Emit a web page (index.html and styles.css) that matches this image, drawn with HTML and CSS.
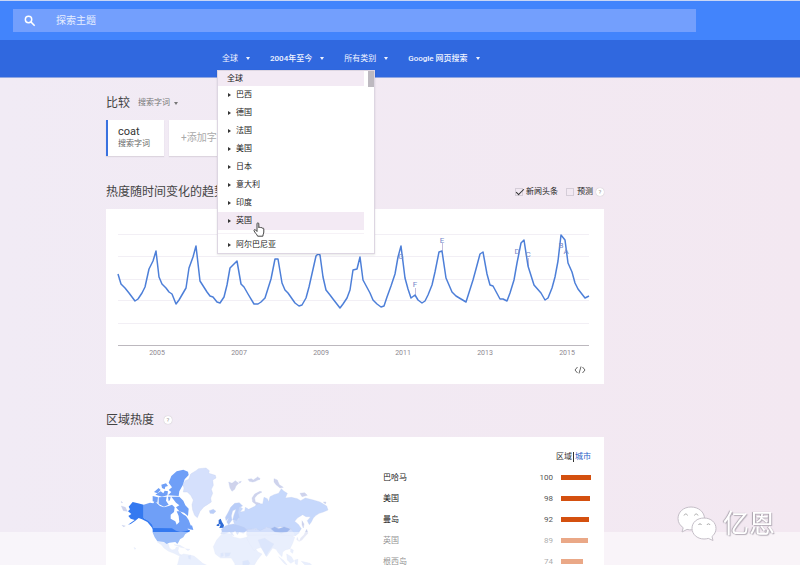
FILE: index.html
```html
<!DOCTYPE html>
<html lang="zh-CN">
<head>
  <meta charset="UTF-8">
  <meta name="viewport" content="width=device-width, initial-scale=1">
  <title>coat - 探索主题</title>
  <link rel="stylesheet" href="styles.css">
</head>
<body>
  <header>
    <div class="topbar">
      <form class="search">
        <svg class="search-icon" viewBox="0 0 24 24" aria-hidden="true"><circle cx="9.500" cy="9.500" r="5.500"/><path d="M13.500 13.500L20 20"/></svg>
        <input type="text" class="search-input" aria-label="探索主题" placeholder="探索主题">
      </form>
    </div>
    <nav class="filters">
      <div class="filter">
        <button class="filter-btn">全球<span class="caret"></span></button>
        <div class="menu">
          <div class="menu-list">
            <button class="menu-item first">全球</button>
            <button class="menu-item"><span class="arrow"></span>巴西</button>
            <button class="menu-item"><span class="arrow"></span>德国</button>
            <button class="menu-item"><span class="arrow"></span>法国</button>
            <button class="menu-item"><span class="arrow"></span>美国</button>
            <button class="menu-item"><span class="arrow"></span>日本</button>
            <button class="menu-item"><span class="arrow"></span>意大利</button>
            <button class="menu-item"><span class="arrow"></span>印度</button>
            <button class="menu-item active"><span class="arrow"></span>英国</button>
            <hr class="menu-line">
            <button class="menu-item last"><span class="arrow"></span>阿尔巴尼亚</button>
          </div>
          <div class="menu-thumb"></div>
          <svg class="cursor" viewBox="0 0 12 15" aria-hidden="true"><path d="M4 9.500V1.800c0-1.300 1.800-1.300 1.800 0v4c.2-.9 1.700-.8 1.700.2.300-.8 1.700-.6 1.700.4.400-.6 1.600-.4 1.600.6v3c0 1.500-.9 2.200-.9 4.200H4.600C4.200 12.500 1.500 10.500 1 8.600.8 7.600 2 7.200 2.700 8z"/></svg>
        </div>
      </div>
      <button class="filter-btn bold">2004年至今<span class="caret"></span></button>
      <button class="filter-btn">所有类别<span class="caret"></span></button>
      <button class="filter-btn bold">Google 网页搜索<span class="caret"></span></button>
    </nav>
  </header>

  <main>
    <div class="compare">
      <h2>比较</h2>
      <button class="type-btn">搜索字词<span class="caret"></span></button>
    </div>
    <div class="terms">
      <div class="term">
        <span class="term-name">coat</span>
        <span class="term-type">搜索字词</span>
      </div>
      <button class="add-term">+添加字词</button>
    </div>

    <div class="section-head">
      <h2>热度随时间变化的趋势</h2>
      <div class="options">
        <label><input type="checkbox" checked>新闻头条</label>
        <label><input type="checkbox">预测</label>
        <button class="help">?</button>
      </div>
    </div>
    <section class="card">
      <svg class="chart" viewBox="106 209 498 150" role="img" aria-label="热度随时间变化的趋势">
        <path class="grid" d="M118 234.500H589M118 256.500H589M118 279.500H589M118 300.500H589M118 323.500H589"/>
        <path class="axis" d="M118 345.500H589"/>
        <path class="flag" d="M442.500 243V251M415.500 288V296M401.500 251V253M528.500 258V266"/>
        <polyline class="line" points="118,274 121,284 125,288 129,293 135,301 138,299 142,293 145,287 149,269 153,261 156,251 159,277 162,284 166,288 169,292 172,294 176,304 179,300 186,288 189,268 193,257 196,246 200,281 207,292 210,296 213,297 217,302 220,303 224,297 227,285 230,268 237,261 241,284 244,287 248,294 254,304 258,304 261,302 265,298 271,279 275,259 278,259 282,283 285,290 288,293 295,303 299,306 302,305 306,298 309,287 316,256 318,254 320,255 323,277 326,290 330,295 333,299 340,308 343,304 347,298 350,290 353,270 357,269 360,257 363,280 370,293 373,300 377,304 381,307 384,306 387,297 391,286 395,274 398,257 401,246 405,278 408,289 411,298 415,295 418,300 422,303 425,301 428,295 432,285 435,272 439,252 442,251 446,278 452,292 456,296 466,302 473,280 476,269 480,254 483,252 487,274 490,285 493,286 500,299 503,299 507,301 510,293 514,280 517,263 521,243 524,240 528,266 534,285 541,293 545,300 548,298 552,288 555,277 558,261 561,235 565,240 568,263 572,272 575,283 578,289 585,298 589,296"/>
        <g class="notes">
          <text x="401" y="259">G</text>
          <text x="442" y="243">E</text>
          <text x="415" y="287">F</text>
          <text x="517" y="254">D</text>
          <text x="528" y="257">C</text>
          <text x="561" y="248">B</text>
          <text x="566" y="254">A</text>
        </g>
        <g class="years">
          <text x="157" y="355">2005</text>
          <text x="239" y="355">2007</text>
          <text x="321" y="355">2009</text>
          <text x="403" y="355">2011</text>
          <text x="485" y="355">2013</text>
          <text x="567" y="355">2015</text>
        </g>
      </svg>
      <div class="card-foot">
        <button class="embed" aria-label="&lt;/&gt;"><svg viewBox="0 0 12 8" aria-hidden="true"><path d="M3.500 1L1 4l2.500 3M8.500 1L11 4 8.500 7M7 .5L5 7.500"/></svg></button>
      </div>
    </section>

    <div class="section-head region-head">
      <h2>区域热度</h2>
      <button class="help">?</button>
    </div>
    <section class="card region">
      <svg class="map" viewBox="54 195 636 324" role="img" aria-label="区域热度">
        <!-- rest of the world -->
        <g class="land">
          <path d="M172 426L200 428 206 434 208 444 216 450 226 448 228 442 236 442 234 452 238 462 248 466 246 470 234 466 222 460 206 454 192 444 184 434zM222 434L240 436 254 444 242 442zM256 446L270 448 264 452z"/>
          <path d="M238 470L250 462 264 464 282 468 294 478 308 490 330 500 326 519 250 519 232 496 236 482z"/>
          <path d="M364 404L376 400 396 402 398 410 420 416 440 412 452 418 462 440 474 456 486 462 472 480 460 500 456 519 410 519 404 490 394 474 362 474 346 462 340 440 350 420z"/>
          <path d="M444 404L470 400 500 406 530 400 570 404 584 412 578 430 570 446 556 450 548 456 546 470 536 460 528 448 518 444 508 458 500 470 492 456 484 442 470 446 462 452 448 430 440 414z"/>
          <path d="M440 386L480 388 510 380 590 390 598 398 584 408 530 404 440 406z"/>
          <path d="M536 470L552 482 562 496 552 490zM560 462L574 470 582 484 572 490 562 480zM584 480L594 478 592 494 586 492zM604 484L630 490 640 500 616 496zM560 498L580 502 574 504zM572 446L580 450 578 460 572 456z"/>
          <path d="M102 442L108 446 104 448z"/>
        </g>
        <path class="land mid" d="M474 420L494 414 508 424 522 432 514 444 504 458 498 468 490 454 482 440zM362 460L370 458 370 468 362 470zM374 458L392 458 388 468 376 470zM428 484L444 480 450 490 440 502 428 496zM264 468L272 466 272 478 266 476z"/>
        <!-- greenland, iceland -->
        <path class="land pale" d="M248 254L256 242 266 238 272 222 288 212 296 206 318 204 328 212 326 220 346 226 348 234 338 240 340 256 334 268 338 280 332 294 334 306 322 314 312 320 300 334 292 353 284 346 278 330 276 314 280 300 272 286 262 276 250 276 252 264z"/>
        <path class="land mid" d="M328 332L340 328 348 334 340 341 330 340z"/>
        <!-- russia and europe -->
        <path class="land russia" d="M412 328L420 320 428 326 420 336 434 334 436 322 446 328 466 318 470 310 488 312 492 292 502 296 506 306 510 290 522 284 536 280 544 266 552 274 562 280 556 294 574 292 592 296 602 302 616 294 640 300 660 306 680 318 684 330 670 336 658 340 648 346 640 354 634 366 628 374 622 362 632 350 618 350 608 344 592 354 584 364 596 374 604 386 596 398 586 408 582 398 570 384 540 380 520 386 500 382 480 392 470 386 440 388 428 398 412 386 404 374 400 362 416 358z"/>
        <path class="land mid" d="M376 352L384 338 392 322 404 310 418 308 428 318 418 322 414 336 418 352 410 362 398 360 402 344 408 328 398 332 394 348 396 360 386 374 380 366 386 354 378 362z"/>
        <path class="land mid" d="M364 388L376 378 386 374 400 372 414 376 432 382 442 390 430 400 418 396 412 404 406 394 396 398 402 408 388 396 374 402 362 402 366 394z"/>
        <path class="land mongolia" d="M512 386L524 380 536 386 552 380 572 386 562 396 544 400 524 396z"/>
        <path class="land isle" d="M386 246L396 250 406 242 416 250 408 258 404 268 396 274 390 264zM416 246L424 244 420 250zM444 238L454 236 460 240 474 230 478 238 466 244 458 246 448 244zM474 236L480 234 478 240zM522 236L532 240 538 254 550 262 540 264 528 254 522 246zM458 306L456 294 464 282 480 274 486 276 472 284 464 294 466 306 480 310 470 314zM600 280L614 278 622 286 606 290zM670 306L678 306 676 312zM606 362L612 372 610 384 606 374zM620 388L624 400 614 410 606 420 598 424 602 414 612 404zM592 412L596 424 590 418z"/>
        <!-- canada -->
        <g class="canada">
          <path d="M206 248L214 228 230 214 250 209 264 215 266 225 254 238 248 256 238 274 236 288 204 286 214 276 206 270 216 262z"/>
          <path d="M162 276L176 264 182 270 172 280zM184 254L198 250 204 258 196 260 194 268 186 264zM166 284L182 274 190 280 194 272 204 274 202 286 186 290zM158 288L174 292 172 308 158 304zM176 292L200 290 198 302 206 314 192 320 176 312zM204 290L212 290 210 300 206 304zM214 290L238 290 250 302 256 316 266 326 264 348 252 338 238 334 228 322 238 316 228 308z"/>
          <path d="M131 314L150 308 160 310 164 304 180 318 192 322 206 318 216 314 224 322 222 336 212 344 212 356 226 364 230 374 238 366 236 348 230 334 240 334 248 342 258 348 266 360 272 376 278 386 262 386 270 392 256 400 238 400 218 390 158 388 150 372 140 360 131 354z"/>
          <path d="M266 380L276 376 280 390 268 388z"/>
        </g>
        <path class="usa" d="M85 348L94 342 84 334 90 328 86 320 98 306 114 310 131 314 131 354 144 362 156 374 160 386 152 378 142 366 126 358 116 354 106 362 92 372 84 374 104 360 92 356z"/>
        <path class="usa" d="M158 384L216 385 228 392 242 396 256 394 268 390 270 394 256 402 250 412 240 418 236 426 232 432 226 426 208 428 200 432 192 426 172 424 164 412 158 398z"/>
        <path class="land isle" d="M64 318L76 322 82 334 70 332zM64 304L68 308 64 308zM66 376L76 378 70 380z"/>
        <path class="usa uk" d="M356 360L362 356 366 366 372 376 370 383 358 384 362 374 356 370zM350 374L358 370 358 378 350 378z"/>
      </svg>
      <div class="ranking">
        <div class="tabs"><span>区域</span><span class="bar-sep"></span><a href="#city">城市</a></div>
        <table>
          <tr><td>巴哈马</td><td class="num">100</td><td class="bar"><div style="width: 100%"></div></td></tr>
          <tr><td>美国</td><td class="num">98</td><td class="bar"><div style="width: 98%"></div></td></tr>
          <tr><td>曼岛</td><td class="num">92</td><td class="bar"><div style="width: 92%"></div></td></tr>
          <tr><td>英国</td><td class="num">89</td><td class="bar"><div style="width: 89%"></div></td></tr>
          <tr><td>根西岛</td><td class="num">74</td><td class="bar"><div style="width: 74%"></div></td></tr>
        </table>
      </div>
    </section>
  </main>

  <div class="fade"></div>
  <div class="watermark">
    <svg viewBox="0 0 40 36" aria-hidden="true">
      <path d="M14 1C6.500 1 1 6 1 12.500c0 4 2 7 5.200 9.200L5 26l5-2.600c7 2 17-2 17.500-10.900C27.500 6 21.500 1 14 1z"/>
      <path d="M27 12c-7 0-12 4.500-12 10.300S20 33 27 33c1.600 0 3-.2 4.300-.6L36 34.500l-1-4c2.500-2 4-4.800 4-8C39 16.500 34 12 27 12z"/>
      <path class="eyes" d="M7 9.500c.5-2 3-2 3.500 0M17.500 9.500c.5-2 3-2 3.500 0M21.500 19c.4-1.600 2.600-1.600 3 0M30 19c.4-1.600 2.600-1.600 3 0"/>
    </svg>
    <span>亿恩</span>
  </div>
</body>
</html>
```

FILE: styles.css
```css
* {
  box-sizing: border-box;
}

body {
  margin: 0;
  height: 100vh;
  overflow: hidden;
  background: linear-gradient(to right, #f1ebf5, #f3e8f1);
  font-family: Roboto, "Noto Sans CJK SC", sans-serif;
  font-size: 8px;
  line-height: 12px;
  color: #333;
}

button {
  padding: 0;
  border: none;
  background: none;
  font: inherit;
  color: inherit;
  cursor: pointer;
}

h2 {
  margin: 0;
  font-size: 12px;
  line-height: 16px;
  font-weight: normal;
  color: #444;
}

/* header */
.topbar {
  height: 40px;
  padding: 8px 104px 8px 13px;
  border-top: 1px solid #c9d6f5;
  background: #4284fc;
}

.search {
  display: flex;
  align-items: center;
  height: 23px;
  padding-left: 10px;
  background: #739ffd;
}

.search-icon {
  width: 14px;
  height: 14px;
  fill: none;
  stroke: #fff;
  stroke-width: 2.5px;
}

.search-input {
  flex: 1;
  min-width: 0;
  margin-left: 19px;
  padding: 0;
  border: none;
  outline: none;
  background: none;
  font: inherit;
  font-size: 10px;
  color: #fff;
}

.search-input::placeholder {
  color: #e6eeff;
}

.filters {
  display: flex;
  gap: 20px;
  height: 38px;
  padding-left: 222px;
  border-bottom: 1px solid #8fa6e2;
  background: #3068df;
  color: #f0f4ff;
}

.filter {
  position: relative;
  display: flex;
}

.filter-btn {
  display: flex;
  align-items: center;
  gap: 8px;
  white-space: nowrap;
}

.bold {
  font-weight: 500;
}

.caret {
  border: 2px solid transparent;
  border-top: 3px solid currentColor;
  border-bottom: 0;
}

/* drop-down menu */
.menu {
  position: absolute;
  z-index: 2;
  top: 30px;
  left: -5px;
  display: flex;
  width: 158px;
  border: 1px solid #ddd6e2;
  background: #fff;
  box-shadow: 0 1px 2px rgba(0, 0, 0, 0.1);
  color: #222;
}

.menu-list {
  flex: 1;
}

.menu-item {
  display: flex;
  align-items: center;
  gap: 5px;
  width: 100%;
  height: 18px;
  padding-left: 10px;
}

.menu-item.first {
  height: 15px;
  padding-left: 9px;
}

.menu-item.last {
  height: 16px;
}

.menu-item.first,
.menu-item.active {
  background: #f3eaf4;
}

.arrow {
  border: 2px solid transparent;
  border-left: 3px solid #333;
  border-right: 0;
}

.menu-line {
  height: 1px;
  margin: 3px 0;
  border: none;
  background: #f6f2f7;
}

.menu-thumb {
  width: 6px;
  height: 16px;
  margin-left: 4px;
  background: #bdb9c0;
}

.cursor {
  position: absolute;
  left: 35px;
  top: 151px;
  width: 12px;
  height: 15px;
  fill: #fff;
  stroke: #444;
}

/* content */
main {
  max-width: 604px;
  padding: 17px 0 0 106px;
}

.compare {
  display: flex;
  align-items: center;
  gap: 8px;
}

.type-btn {
  display: flex;
  align-items: center;
  gap: 4px;
  color: #777;
}

.terms {
  display: flex;
  gap: 5px;
  height: 36px;
  margin-top: 9px;
}

.term {
  display: flex;
  flex-direction: column;
  justify-content: center;
  width: 58px;
  padding-left: 10px;
  border-left: 2px solid #3a72e0;
  background: #fff;
  box-shadow: 0 1px 1px #ddd5df;
}

.term-name {
  font-size: 11px;
}

.term-type {
  color: #666;
}

.add-term {
  width: 76px;
  padding-left: 12px;
  background: #fff;
  box-shadow: 0 1px 1px #ddd5df;
  font-size: 10px;
  text-align: left;
  color: #aaa;
}

.section-head {
  display: flex;
  align-items: center;
  justify-content: space-between;
  margin: 28px 0 9px;
}

.options,
.options label {
  display: flex;
  align-items: center;
}

.options {
  gap: 8px;
  color: #222;
}

.options label {
  gap: 3px;
}

.options input {
  appearance: none;
  position: relative;
  width: 8px;
  height: 8px;
  margin: 0;
  border: 1px solid #d5cdd8;
}

.options input:checked::after {
  content: "";
  position: absolute;
  left: 2px;
  top: -2px;
  width: 3px;
  height: 7px;
  border: solid #333;
  border-width: 0 1px 1px 0;
  transform: rotate(45deg);
}

.help {
  width: 8px;
  height: 8px;
  border-radius: 50%;
  background: #fff;
  box-shadow: 0 0 1px #aaa;
  font-size: 6px;
  line-height: 8px;
  color: #999;
}

.options .help {
  margin-left: -5px;
}

.card {
  background: #fff;
}

/* trend chart */
.chart {
  display: block;
  width: 100%;
}

.grid,
.axis,
.flag {
  fill: none;
  stroke: #f2eff5;
}

.axis {
  stroke: #bcb8be;
}

.flag {
  stroke: #c3bddd;
}

.line {
  fill: none;
  stroke: #4d7fd8;
  stroke-width: 1.5px;
  stroke-linejoin: round;
}

.notes,
.years {
  text-anchor: middle;
  font-size: 8px;
  fill: #7787c9;
}

.years {
  font-size: 7px;
  fill: #8d888f;
}

.card-foot {
  display: flex;
  justify-content: flex-end;
  height: 25px;
  padding: 7px 18px 0 0;
}

.embed {
  width: 12px;
  height: 8px;
}

.embed svg {
  display: block;
  fill: none;
  stroke: #666;
}

/* regions */
.region-head {
  justify-content: flex-start;
  gap: 10px;
}

.region {
  display: flex;
  padding: 12px 13px 12px 12px;
}

.map {
  flex: none;
  width: 212px;
  height: 108px;
  margin-top: 16px;
}

.land {
  fill: #d3dffb;
  stroke: #c3cdf0;
  stroke-width: 1px;
}

.land.mid {
  fill: #b9cdf8;
}

.land.pale {
  fill: #d5e0fc;
}

.land.russia {
  fill: #c6d8fc;
}

.land.mongolia {
  fill: #9fb8ee;
}

.land.isle {
  fill: #cfd3ec;
}

.canada {
  fill: #6f9ff7;
}

.usa {
  fill: #3479f0;
}

.uk {
  fill: #2f6bd6;
}

.ranking {
  flex: 1;
  margin-left: 53px;
}

.tabs {
  display: flex;
  justify-content: flex-end;
  margin-bottom: 4px;
  padding-top: 2px;
}

.bar-sep {
  width: 1px;
  height: 10px;
  margin: 1px 1px 0;
  background: #333;
}

.tabs a {
  color: #2b62c8;
  text-decoration: none;
}

table {
  width: 100%;
  border-collapse: collapse;
}

td {
  height: 21px;
  padding: 0;
  color: #222;
}

.num {
  text-align: right;
  color: #555;
}

.bar {
  width: 38px;
  padding-left: 8px;
}

.bar div {
  height: 5px;
  background: #d4500f;
}

/* bottom fade and logo over the page */
.fade {
  position: fixed;
  left: 0;
  right: 0;
  bottom: 0;
  height: 33px;
  background: rgba(255, 255, 255, 0.5);
}

.watermark {
  position: fixed;
  right: 25px;
  bottom: 23px;
  display: flex;
  align-items: center;
  gap: 6px;
  font-size: 26px;
  line-height: 36px;
  color: #fff;
  text-shadow: -1px 0 1px #aaa3ad, 1px 1px 1px #b5aeb8;
}

.watermark svg {
  width: 40px;
  height: 36px;
  fill: #fff;
  stroke: #c4bec7;
}

.watermark .eyes {
  fill: none;
  stroke: #aaa;
}
```
